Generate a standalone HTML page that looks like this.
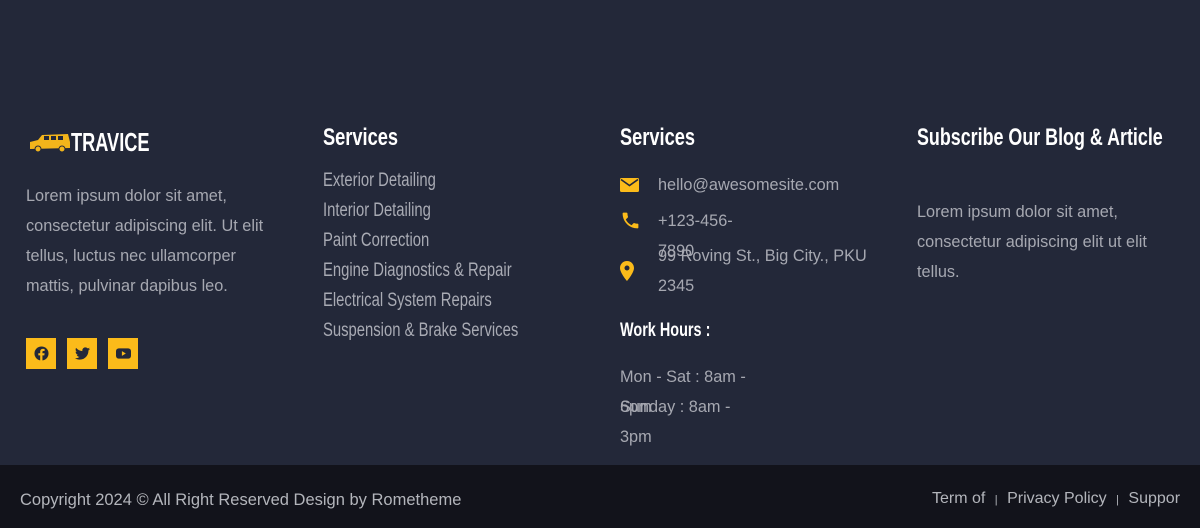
<!DOCTYPE html>
<html><head><style>
*{margin:0;padding:0;box-sizing:border-box}
body{width:1200px;height:528px;background:#232839;font-family:"Liberation Sans",sans-serif;position:relative;overflow:hidden;color:#a6a8b1}
.a{position:absolute;white-space:nowrap}
.c{display:inline-block;transform:scaleX(.76);transform-origin:left center;}
.h{color:#fff;font-weight:bold;font-size:24px}
.p{font-size:16.3px;line-height:30px;color:#a6a8b1}
.s{font-size:19px;color:#a9abb4;line-height:30px}
.s .c{transform:scaleX(.78)}
.soc{position:absolute;top:338px;width:30px;height:31px;background:#fbbb1a;display:flex;align-items:center;justify-content:center}
.bar{position:absolute;left:0;top:465px;width:1200px;height:63px;background:#12131b}
.ico{position:absolute;left:620px}
</style></head><body>
<svg class="a" style="left:28px;top:132px" width="44" height="22" viewBox="0 0 44 22">
<path d="M2 10 L10 8 L14 3 L40 2 L42 10 L42 16 L2 17 Z" fill="#f3b51b"/>
<rect x="16" y="4" width="5" height="4" fill="#232839"/><rect x="23" y="4" width="5" height="4" fill="#232839"/><rect x="30" y="4" width="5" height="4" fill="#232839"/>
<circle cx="10" cy="17" r="3" fill="#f3b51b" stroke="#232839"/><circle cx="34" cy="17" r="3" fill="#f3b51b" stroke="#232839"/>
</svg>
<div class="a h" style="left:71px;top:127px;font-size:26px"><span class="c" style="transform:scaleX(.7)">TRAVICE</span></div>
<div class="a p" style="left:26px;top:181px">Lorem ipsum dolor sit amet,<br>consectetur adipiscing elit. Ut elit<br>tellus, luctus nec ullamcorper<br>mattis, pulvinar dapibus leo.</div>
<div class="soc" style="left:26px"><svg width="15" height="15" viewBox="0 0 16 16"><circle cx="8" cy="8" r="7.5" fill="#232839"/><path d="M9 16V10h2l.3-2.3H9V6.4c0-.7.2-1.1 1.1-1.1h1.2V3.2c-.3 0-1-.1-1.8-.1-1.8 0-2.9 1-2.9 3v1.6H4.6V10h2v6z" fill="#fbbb1a"/></svg></div>
<div class="soc" style="left:67px"><svg width="15" height="13" viewBox="0 0 24 20"><path d="M24 2.4c-.9.4-1.8.7-2.8.8 1-.6 1.8-1.6 2.2-2.7-1 .6-2 1-3.1 1.2C19.3.7 18 .1 16.6.1c-2.7 0-4.9 2.2-4.900 4.9 0 .4 0 .8.1 1.1C7.7 5.9 4.1 4 1.7 1 1.2 1.7 1 2.6 1 3.5c0 1.7.9 3.2 2.2 4.1-.8 0-1.6-.2-2.2-.6v.1c0 2.4 1.7 4.4 3.9 4.8-.4.1-.9.2-1.3.2-.3 0-.6 0-.9-.1.6 2 2.4 3.4 4.6 3.4-1.7 1.3-3.8 2.1-6.1 2.1H0c2.2 1.4 4.8 2.2 7.5 2.2 9.1 0 14-7.500 14-14v-.6c1-.7 1.8-1.6 2.5-2.6z" fill="#232839"/></svg></div>
<div class="soc" style="left:108px"><svg width="15" height="11" viewBox="0 0 16 11"><rect width="16" height="11" rx="3" fill="#232839"/><path d="M6.3 3v5l4.2-2.5z" fill="#fbbb1a"/></svg></div>

<div class="a h" style="left:323px;top:124px"><span class="c">Services</span></div>
<div class="a s" style="left:323px;top:166px"><span class="c">Exterior Detailing<br>Interior Detailing<br>Paint Correction<br>Engine Diagnostics &amp; Repair<br>Electrical System Repairs<br>Suspension &amp; Brake Services</span></div>

<div class="a h" style="left:620px;top:124px"><span class="c">Services</span></div>
<svg class="ico" style="top:178px" width="19" height="14" viewBox="0 0 19 14"><rect width="19" height="14" rx="1.5" fill="#fbbb1a"/><path d="M1 1.5l8.5 6 8.5-6" stroke="#232839" stroke-width="1.6" fill="none"/></svg>
<svg class="ico" style="top:210px" width="21" height="21" viewBox="0 0 24 24"><path d="M6.6 10.8c1.4 2.8 3.8 5.1 6.6 6.6l2.2-2.2c.3-.3.7-.4 1-.2 1.1.4 2.3.6 3.6.6.6 0 1 .4 1 1V20c0 .6-.4 1-1 1C10.6 21 3 13.4 3 4c0-.6.4-1 1-1h3.5c.6 0 1 .4 1 1 0 1.3.2 2.5.6 3.6.1.3 0 .7-.2 1z" fill="#fbbb1a"/></svg>
<svg class="ico" style="top:261px" width="14" height="20" viewBox="0 0 14 20"><path d="M7 0C3.1 0 0 3.1 0 7c0 5 7 13 7 13s7-8 7-13c0-3.9-3.1-7-7-7zm0 9.5A2.5 2.5 0 1 1 7 4.5a2.5 2.5 0 0 1 0 5z" fill="#fbbb1a"/></svg>
<div class="a p" style="left:658px;top:170px">hello@awesomesite.com</div>
<div class="a p" style="left:658px;top:206px">+123-456-<br>7890</div>
<div class="a p" style="left:658px;top:241px">99 Roving St., Big City., PKU<br>2345</div>
<div class="a h" style="left:620px;top:320px;font-size:19px"><span class="c">Work Hours :</span></div>
<div class="a p" style="left:620px;top:362px">Mon - Sat : 8am -<br>6pm</div>
<div class="a p" style="left:620px;top:392px">Sunday : 8am -<br>3pm</div>

<div class="a h" style="left:917px;top:124px"><span class="c" style="transform:scaleX(.745)">Subscribe Our Blog &amp; Article</span></div>
<div class="a p" style="left:917px;top:197px">Lorem ipsum dolor sit amet,<br>consectetur adipiscing elit ut elit<br>tellus.</div>

<div class="bar"></div>
<div class="a" style="left:20px;top:491px;font-size:16.5px;color:#b3b5bb">Copyright 2024 © All Right Reserved Design by Rometheme</div>
<div class="a" style="left:932px;top:490px;font-size:16px;color:#b3b5bb">Term of <span style="font-size:11px;margin:0 5px">|</span> Privacy Policy <span style="font-size:11px;margin:0 5px">|</span> Suppor</div>
</body></html>
